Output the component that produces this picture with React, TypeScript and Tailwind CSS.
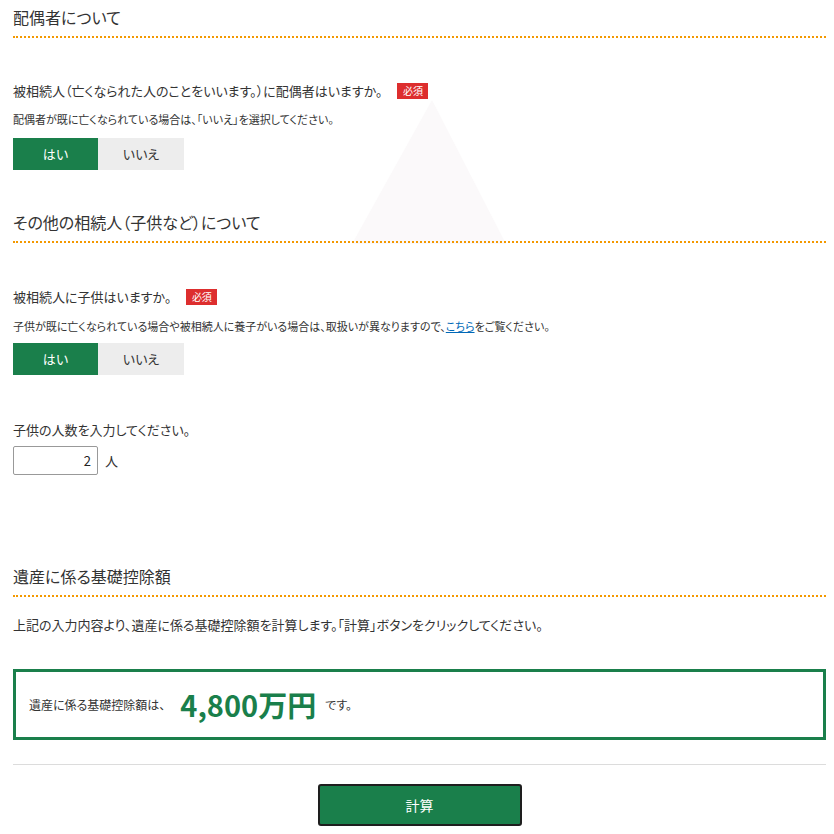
import React, { useState } from 'react';

const font = "font-['Meiryo_UI','Noto_Sans_CJK_JP',sans-serif] [font-feature-settings:'palt']";

const Badge: React.FC = () => (
  <span className="ml-[15px] inline-flex h-[16px] w-[31px] items-center justify-center bg-[#dd2e2e] text-[10px] leading-none text-white">
    必須
  </span>
);

const SectionTitle: React.FC<{ title: string; className?: string }> = ({ title, className = '' }) => (
  <h2 className={`border-b-2 border-dotted border-[#f39800] pb-[5px] text-[16px] leading-[27px] font-normal text-[#333] ${className}`}>
    {title}
  </h2>
);

const YesNo: React.FC<{ value: boolean; onChange: (v: boolean) => void }> = ({ value, onChange }) => (
  <div className="flex">
    <button
      onClick={() => onChange(true)}
      className={`h-[32px] w-[85px] text-[13px] ${value ? 'bg-[#1a7f4b] text-white' : 'bg-[#ededed] text-[#333]'}`}
    >
      はい
    </button>
    <button
      onClick={() => onChange(false)}
      className={`h-[32px] w-[86px] text-[13px] ${!value ? 'bg-[#1a7f4b] text-white' : 'bg-[#ededed] text-[#333]'}`}
    >
      いいえ
    </button>
  </div>
);

export default function App() {
  const [hasSpouse, setHasSpouse] = useState(true);
  const [hasChild, setHasChild] = useState(true);
  const [childCount, setChildCount] = useState('2');

  return (
    <div className={`relative min-h-[834px] bg-white pl-[13px] pr-[8px] text-[#333] ${font}`}>
      {/* 背景の薄い三角形 */}
      <svg className="pointer-events-none absolute left-[352px] top-[100px]" width="154" height="144" viewBox="0 0 154 144">
        <polygon points="80,0 154,144 0,144" fill="#fbf9fa" />
      </svg>

      <div className="relative">
        {/* 配偶者について */}
        <SectionTitle title="配偶者について" className="pt-[4px]" />

        <div className="mt-[43px] flex items-center text-[13px] leading-[20px]">
          被相続人（亡くなられた人のことをいいます。）に配偶者はいますか。
          <Badge />
        </div>
        <p className="mt-[10px] text-[11px] leading-[16px]">配偶者が既に亡くなられている場合は、「いいえ」を選択してください。</p>
        <div className="mt-[11px]">
          <YesNo value={hasSpouse} onChange={setHasSpouse} />
        </div>

        {/* その他の相続人 */}
        <SectionTitle title="その他の相続人（子供など）について" className="mt-[39px]" />

        <div className="mt-[44px] flex items-center text-[13px] leading-[20px]">
          被相続人に子供はいますか。
          <Badge />
        </div>
        <p className="mt-[11px] text-[11px] leading-[16px]">
          子供が既に亡くなられている場合や被相続人に養子がいる場合は、取扱いが異なりますので、
          <a href="#" className="text-[#0068b7] underline">こちら</a>
          をご覧ください。
        </p>
        <div className="mt-[9px]">
          <YesNo value={hasChild} onChange={setHasChild} />
        </div>

        <p className="mt-[45px] text-[13px] leading-[20px]">子供の人数を入力してください。</p>
        <div className="mt-[6px] flex items-center">
          <input
            value={childCount}
            onChange={(e) => setChildCount(e.target.value)}
            className="h-[29px] w-[85px] rounded-[2px] border border-[#999] pr-[6px] text-right text-[13px] text-[#222] outline-none"
          />
          <span className="ml-[7px] text-[13px]">人</span>
        </div>

        {/* 基礎控除額 */}
        <SectionTitle title="遺産に係る基礎控除額" className="mt-[88px]" />

        <p className="mt-[18px] text-[13px] leading-[20px]">
          上記の入力内容より、遺産に係る基礎控除額を計算します。「計算」ボタンをクリックしてください。
        </p>

        <div className="mt-[34px] flex h-[71px] items-center border-[3px] border-[#1a7f4b] pl-[13px]">
          <span className="text-[12px]">遺産に係る基礎控除額は、</span>
          <span className="ml-[15px] text-[29px] font-bold leading-none text-[#1a7f4b]">4,800万円</span>
          <span className="ml-[9px] text-[12px]">です。</span>
        </div>

        <hr className="mt-[24px] border-t border-[#dcdcdc]" />

        <div className="mt-[19px] flex justify-center">
          <button className="h-[42px] w-[204px] rounded-[3px] border-2 border-[#1e1e1e] bg-[#1a7f4b] text-[14px] text-white">
            計算
          </button>
        </div>
      </div>
    </div>
  );
}
